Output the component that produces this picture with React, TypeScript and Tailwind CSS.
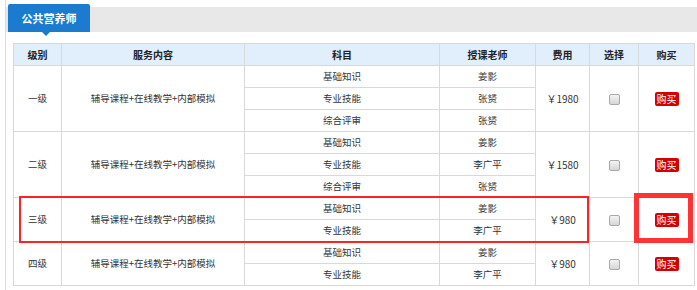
import React from "react";

type Sub = { subject: string; teacher: string };
type Level = { level: string; content: string; price: string; subs: Sub[] };

const levels: Level[] = [
  {
    level: "一级",
    content: "辅导课程+在线教学+内部模拟",
    price: "￥1980",
    subs: [
      { subject: "基础知识", teacher: "姜影" },
      { subject: "专业技能", teacher: "张赟" },
      { subject: "综合评审", teacher: "张赟" },
    ],
  },
  {
    level: "二级",
    content: "辅导课程+在线教学+内部模拟",
    price: "￥1580",
    subs: [
      { subject: "基础知识", teacher: "姜影" },
      { subject: "专业技能", teacher: "李广平" },
      { subject: "综合评审", teacher: "张赟" },
    ],
  },
  {
    level: "三级",
    content: "辅导课程+在线教学+内部模拟",
    price: "￥980",
    subs: [
      { subject: "基础知识", teacher: "姜影" },
      { subject: "专业技能", teacher: "李广平" },
    ],
  },
  {
    level: "四级",
    content: "辅导课程+在线教学+内部模拟",
    price: "￥980",
    subs: [
      { subject: "基础知识", teacher: "姜影" },
      { subject: "专业技能", teacher: "李广平" },
    ],
  },
];

const td = "border border-[#d9d9d9] h-[22px] p-0 text-center align-middle";
const th = "border border-[#d9d9d9] h-[22px] p-0 text-center align-middle font-bold text-[10px] text-[#222]";

function CheckBox() {
  return (
    <span className="inline-block w-[11px] h-[11px] border border-[#a8a8a8] rounded-[2px] bg-gradient-to-b from-[#f4f4f4] to-[#d6d6d6] align-middle" />
  );
}

function BuyButton() {
  return (
    <span className="inline-block w-[24px] h-[14px] leading-[14px] rounded-[2px] bg-[#d40000] text-white text-[10px] align-middle">
      购买
    </span>
  );
}

export default function App() {
  return (
    <div
      className="w-[697px] h-[290px] bg-white overflow-hidden text-[9.5px] text-[#333]"
      style={{ fontFamily: '"SimSun", "Noto Sans CJK SC", sans-serif' }}
    >
      <div className="ml-[5px] pt-[7px] h-full border-l border-[#dcdcdc]">
        {/* 标签栏 */}
        <div className="h-[25px] bg-[#e8e8e8] relative">
          <div className="absolute left-[2px] top-[-3px] w-[82px] h-[28px] bg-[#1b7ccf] rounded-t-[2px] text-white text-[11px] font-bold flex items-center justify-center">
            公共营养师
            <span className="absolute left-[34px] bottom-[-4px] w-0 h-0 border-l-[4px] border-r-[4px] border-t-[4px] border-l-transparent border-r-transparent border-t-[#1b7ccf]" />
          </div>
        </div>

        <div className="relative mt-[11px] ml-[7px]">
          <table className="border-collapse table-fixed w-[681px]">
            <colgroup>
              <col className="w-[48px]" />
              <col className="w-[183px]" />
              <col className="w-[195px]" />
              <col className="w-[96px]" />
              <col className="w-[54px]" />
              <col className="w-[49px]" />
              <col className="w-[56px]" />
            </colgroup>
            <thead>
              <tr className="bg-[#e1eefb]">
                <th className={th}>级别</th>
                <th className={th}>服务内容</th>
                <th className={th}>科目</th>
                <th className={th}>授课老师</th>
                <th className={th}>费用</th>
                <th className={th}>选择</th>
                <th className={th}>购买</th>
              </tr>
            </thead>
            <tbody>
              {levels.map((lv) =>
                lv.subs.map((s, i) => (
                  <tr key={lv.level + i}>
                    {i === 0 && (
                      <>
                        <td className={td} rowSpan={lv.subs.length}>{lv.level}</td>
                        <td className={td} rowSpan={lv.subs.length}>{lv.content}</td>
                      </>
                    )}
                    <td className={td}>{s.subject}</td>
                    <td className={td}>{s.teacher}</td>
                    {i === 0 && (
                      <>
                        <td className={td + " text-[10px]"} rowSpan={lv.subs.length}>{lv.price}</td>
                        <td className={td} rowSpan={lv.subs.length}><CheckBox /></td>
                        <td className={td} rowSpan={lv.subs.length}><BuyButton /></td>
                      </>
                    )}
                  </tr>
                ))
              )}
            </tbody>
          </table>

          {/* 标注框 */}
          <div className="absolute left-[6px] top-[153px] w-[570px] h-[47px] border-2 border-[#f22]" />
          <div className="absolute left-[621px] top-[150px] w-[59px] h-[50px] border-[5px] border-[#f33]" />
        </div>
      </div>
    </div>
  );
}
